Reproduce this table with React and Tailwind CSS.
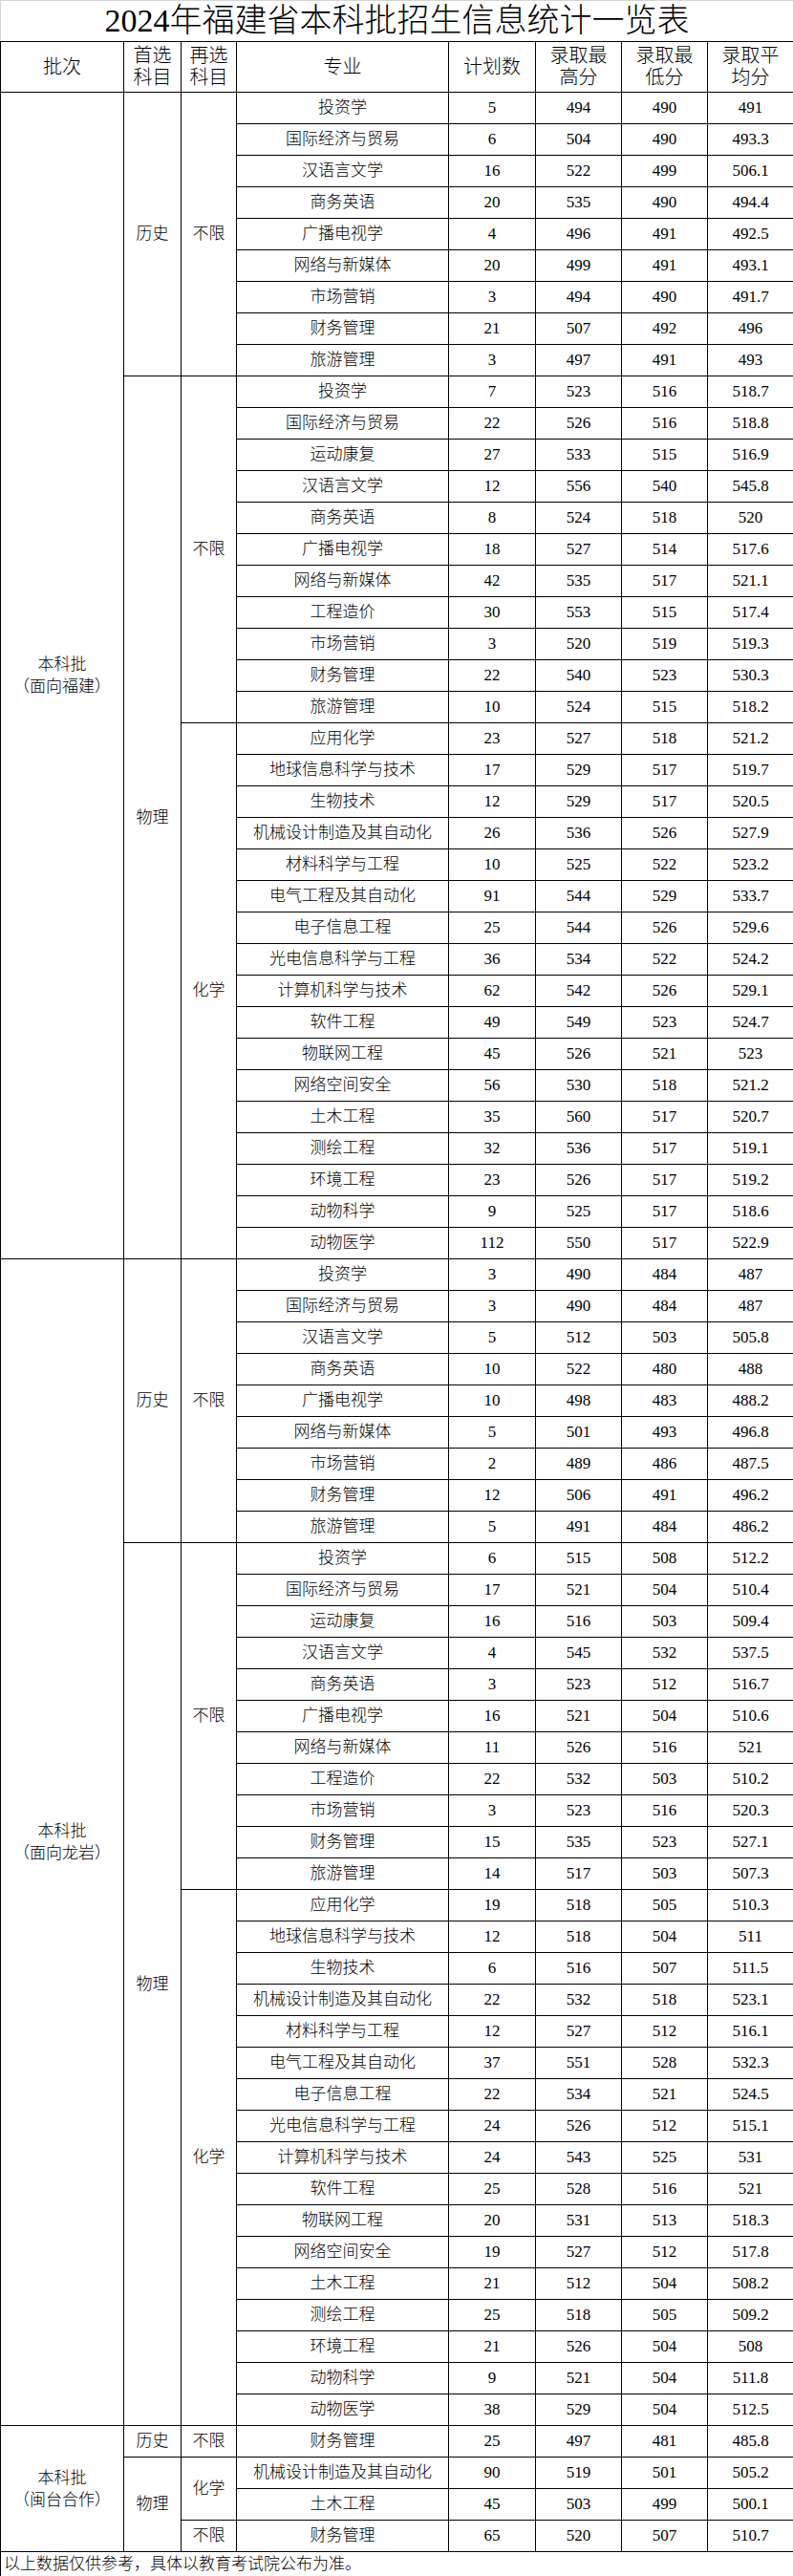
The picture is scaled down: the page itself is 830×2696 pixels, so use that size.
import React from "react";

const FONT = `"Liberation Serif", "Noto Sans CJK SC", serif`;

const sections = [
  {
    name: ["本科批", "（面向福建）"],
    groups: [
      {
        first: "历史",
        subs: [
          {
            second: "不限",
            rows: [
              ["投资学", "5", "494", "490", "491"],
              ["国际经济与贸易", "6", "504", "490", "493.3"],
              ["汉语言文学", "16", "522", "499", "506.1"],
              ["商务英语", "20", "535", "490", "494.4"],
              ["广播电视学", "4", "496", "491", "492.5"],
              ["网络与新媒体", "20", "499", "491", "493.1"],
              ["市场营销", "3", "494", "490", "491.7"],
              ["财务管理", "21", "507", "492", "496"],
              ["旅游管理", "3", "497", "491", "493"],
            ],
          },
        ],
      },
      {
        first: "物理",
        subs: [
          {
            second: "不限",
            rows: [
              ["投资学", "7", "523", "516", "518.7"],
              ["国际经济与贸易", "22", "526", "516", "518.8"],
              ["运动康复", "27", "533", "515", "516.9"],
              ["汉语言文学", "12", "556", "540", "545.8"],
              ["商务英语", "8", "524", "518", "520"],
              ["广播电视学", "18", "527", "514", "517.6"],
              ["网络与新媒体", "42", "535", "517", "521.1"],
              ["工程造价", "30", "553", "515", "517.4"],
              ["市场营销", "3", "520", "519", "519.3"],
              ["财务管理", "22", "540", "523", "530.3"],
              ["旅游管理", "10", "524", "515", "518.2"],
            ],
          },
          {
            second: "化学",
            rows: [
              ["应用化学", "23", "527", "518", "521.2"],
              ["地球信息科学与技术", "17", "529", "517", "519.7"],
              ["生物技术", "12", "529", "517", "520.5"],
              ["机械设计制造及其自动化", "26", "536", "526", "527.9"],
              ["材料科学与工程", "10", "525", "522", "523.2"],
              ["电气工程及其自动化", "91", "544", "529", "533.7"],
              ["电子信息工程", "25", "544", "526", "529.6"],
              ["光电信息科学与工程", "36", "534", "522", "524.2"],
              ["计算机科学与技术", "62", "542", "526", "529.1"],
              ["软件工程", "49", "549", "523", "524.7"],
              ["物联网工程", "45", "526", "521", "523"],
              ["网络空间安全", "56", "530", "518", "521.2"],
              ["土木工程", "35", "560", "517", "520.7"],
              ["测绘工程", "32", "536", "517", "519.1"],
              ["环境工程", "23", "526", "517", "519.2"],
              ["动物科学", "9", "525", "517", "518.6"],
              ["动物医学", "112", "550", "517", "522.9"],
            ],
          },
        ],
      },
    ],
  },
  {
    name: ["本科批", "（面向龙岩）"],
    groups: [
      {
        first: "历史",
        subs: [
          {
            second: "不限",
            rows: [
              ["投资学", "3", "490", "484", "487"],
              ["国际经济与贸易", "3", "490", "484", "487"],
              ["汉语言文学", "5", "512", "503", "505.8"],
              ["商务英语", "10", "522", "480", "488"],
              ["广播电视学", "10", "498", "483", "488.2"],
              ["网络与新媒体", "5", "501", "493", "496.8"],
              ["市场营销", "2", "489", "486", "487.5"],
              ["财务管理", "12", "506", "491", "496.2"],
              ["旅游管理", "5", "491", "484", "486.2"],
            ],
          },
        ],
      },
      {
        first: "物理",
        subs: [
          {
            second: "不限",
            rows: [
              ["投资学", "6", "515", "508", "512.2"],
              ["国际经济与贸易", "17", "521", "504", "510.4"],
              ["运动康复", "16", "516", "503", "509.4"],
              ["汉语言文学", "4", "545", "532", "537.5"],
              ["商务英语", "3", "523", "512", "516.7"],
              ["广播电视学", "16", "521", "504", "510.6"],
              ["网络与新媒体", "11", "526", "516", "521"],
              ["工程造价", "22", "532", "503", "510.2"],
              ["市场营销", "3", "523", "516", "520.3"],
              ["财务管理", "15", "535", "523", "527.1"],
              ["旅游管理", "14", "517", "503", "507.3"],
            ],
          },
          {
            second: "化学",
            rows: [
              ["应用化学", "19", "518", "505", "510.3"],
              ["地球信息科学与技术", "12", "518", "504", "511"],
              ["生物技术", "6", "516", "507", "511.5"],
              ["机械设计制造及其自动化", "22", "532", "518", "523.1"],
              ["材料科学与工程", "12", "527", "512", "516.1"],
              ["电气工程及其自动化", "37", "551", "528", "532.3"],
              ["电子信息工程", "22", "534", "521", "524.5"],
              ["光电信息科学与工程", "24", "526", "512", "515.1"],
              ["计算机科学与技术", "24", "543", "525", "531"],
              ["软件工程", "25", "528", "516", "521"],
              ["物联网工程", "20", "531", "513", "518.3"],
              ["网络空间安全", "19", "527", "512", "517.8"],
              ["土木工程", "21", "512", "504", "508.2"],
              ["测绘工程", "25", "518", "505", "509.2"],
              ["环境工程", "21", "526", "504", "508"],
              ["动物科学", "9", "521", "504", "511.8"],
              ["动物医学", "38", "529", "504", "512.5"],
            ],
          },
        ],
      },
    ],
  },
  {
    name: ["本科批", "（闽台合作）"],
    groups: [
      {
        first: "历史",
        subs: [
          {
            second: "不限",
            rows: [["财务管理", "25", "497", "481", "485.8"]],
          },
        ],
      },
      {
        first: "物理",
        subs: [
          {
            second: "化学",
            rows: [
              ["机械设计制造及其自动化", "90", "519", "501", "505.2"],
              ["土木工程", "45", "503", "499", "500.1"],
            ],
          },
          {
            second: "不限",
            rows: [["财务管理", "65", "520", "507", "510.7"]],
          },
        ],
      },
    ],
  },
];

const cell = "border border-black p-0 text-center align-middle";

const countSection = (s) =>
  s.groups.reduce((n, g) => n + g.subs.reduce((m, sub) => m + sub.rows.length, 0), 0);

const buildRows = () => {
  const out = [];
  sections.forEach((section, si) => {
    const sectionSpan = countSection(section);
    let firstInSection = true;
    section.groups.forEach((group, gi) => {
      const groupSpan = group.subs.reduce((m, sub) => m + sub.rows.length, 0);
      let firstInGroup = true;
      group.subs.forEach((sub, ui) => {
        sub.rows.forEach((row, ri) => {
          out.push(
            <tr key={`${si}-${gi}-${ui}-${ri}`} className="h-[33px]">
              {firstInSection && (
                <td rowSpan={sectionSpan} className={`${cell} leading-[23px]`}>
                  {section.name[0]}
                  <br />
                  {section.name[1]}
                </td>
              )}
              {firstInGroup && (
                <td rowSpan={groupSpan} className={cell}>
                  {group.first}
                </td>
              )}
              {ri === 0 && (
                <td rowSpan={sub.rows.length} className={cell}>
                  {sub.second}
                </td>
              )}
              {row.map((v, ci) => (
                <td key={ci} className={`${cell} whitespace-nowrap`}>
                  {v}
                </td>
              ))}
            </tr>
          );
          firstInSection = false;
          firstInGroup = false;
        });
      });
    });
  });
  return out;
};

const App = () => {
  return (
    <div className="w-[830px] bg-white text-black font-light" style={{ fontFamily: FONT }}>
      <table className="w-[830px] table-fixed border-collapse text-[17px] leading-[20px]">
        <colgroup>
          <col className="w-[129px]" />
          <col className="w-[60px]" />
          <col className="w-[58px]" />
          <col className="w-[222px]" />
          <col className="w-[91px]" />
          <col className="w-[90px]" />
          <col className="w-[90px]" />
          <col className="w-[90px]" />
        </colgroup>
        <tbody>
          <tr className="h-[43px]">
            <td
              colSpan={8}
              className="border border-[#d4d4d4] border-b-black p-0 text-center align-middle text-[34px] leading-[40px]"
            >
              {`2024年福建省本科批招生信息统计一览表`}
            </td>
          </tr>
          <tr className="h-[53px] text-[20px] leading-[23px]">
            <td className={cell}>{`批次`}</td>
            <td className={cell}>
              {`首选`}
              <br />
              {`科目`}
            </td>
            <td className={cell}>
              {`再选`}
              <br />
              {`科目`}
            </td>
            <td className={cell}>{`专业`}</td>
            <td className={cell}>{`计划数`}</td>
            <td className={cell}>
              {`录取最`}
              <br />
              {`高分`}
            </td>
            <td className={cell}>
              {`录取最`}
              <br />
              {`低分`}
            </td>
            <td className={cell}>
              {`录取平`}
              <br />
              {`均分`}
            </td>
          </tr>
          {buildRows()}
          <tr className="h-[27px]">
            <td
              colSpan={8}
              className="border border-[#d4d4d4] border-l-black border-t-black py-0 pl-[3px] text-left align-middle"
            >
              {`以上数据仅供参考，具体以教育考试院公布为准。`}
            </td>
          </tr>
        </tbody>
      </table>
    </div>
  );
};

export default App;
